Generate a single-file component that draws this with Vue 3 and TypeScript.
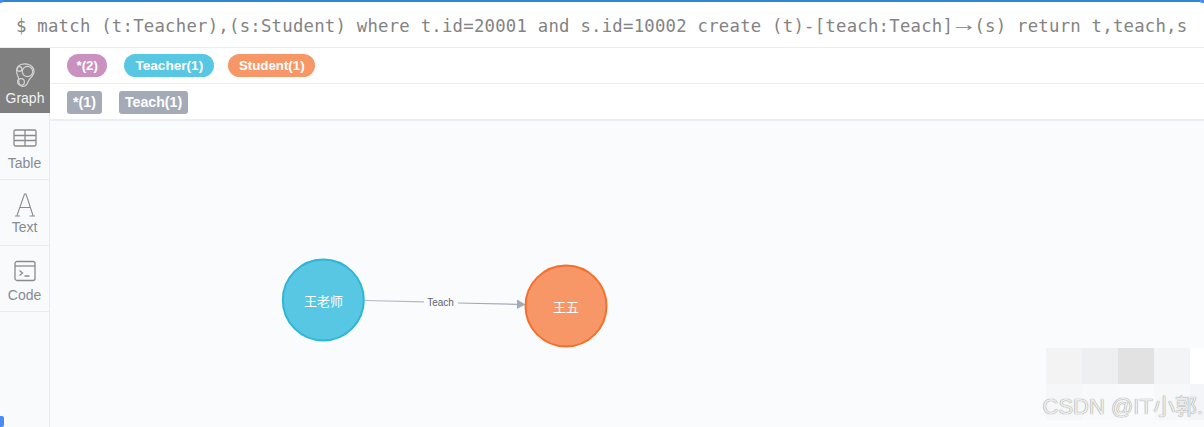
<script setup lang="ts">
const labels = [
  { text: '*(2)', cls: 'pink' },
  { text: 'Teacher(1)', cls: 'blue' },
  { text: 'Student(1)', cls: 'orange' },
]
const rels = ['*(1)', 'Teach(1)']
const mosaic = ['#f3f3f3', '#eeeff0', '#e2e2e3', '#f3f4f5', '#ffffff', '#f6f7f8', '#f8f9fa', '#fafbfc', '#f7f8fa', '#f4f5f8']
</script>

<template>
  <div class="page">
    <header class="query">
      <span class="code">$ match (t:Teacher),(s:Student) where t.id=20001 and s.id=10002 create (t)-[teach:Teach]<span class="arrow">→</span>(s) return t,teach,s</span>
    </header>
    <div class="body">
      <nav class="side">
        <div class="tab active">
          <svg width="24" height="28" viewBox="0 0 24 28" fill="none" stroke="#d4d4d4" stroke-width="1.2">
            <path d="M5 4.500 C8 1.500 13 1.500 17 3 C20 5 22 8 20.500 12 C19 15 16 17 15 20 C14 24 10 25.500 7.500 23.500 C5 21.500 6 19 5.500 16 C3.500 12 2.500 8 5 4.500 Z" />
            <circle cx="14.500" cy="9.500" r="5.200" />
            <circle cx="8" cy="20" r="3.400" />
            <circle cx="6.500" cy="7" r="2.400" />
          </svg>
          <span>Graph</span>
        </div>
        <div class="tab table-tab">
          <svg width="24" height="20" viewBox="0 0 24 20" fill="none" stroke="#8b8b8b" stroke-width="1.300">
            <rect x="1" y="2" width="22" height="16" rx="1.500" />
            <path d="M1 7.500h22M1 12.500h22M12 2v16" />
          </svg>
          <span>Table</span>
        </div>
        <div class="tab text-tab">
          <svg width="22" height="26" viewBox="0 0 22 26" fill="none" stroke="#8b8b8b" stroke-width="1.100">
            <path d="M3 23.500 L10.500 2 L12 2 L19 23.500 M6 15.500 H16 M1 24 H6 M15.500 24 H21" />
          </svg>
          <span>Text</span>
        </div>
        <div class="tab code-tab">
          <svg width="24" height="24" viewBox="0 0 24 24" fill="none" stroke="#8b8b8b" stroke-width="1.300">
            <rect x="2" y="2.500" width="20" height="19" rx="2" />
            <path d="M2 7h20" />
            <path d="M6.500 11.500l3 2.500-3 2.500M11.500 17h5" />
          </svg>
          <span>Code</span>
        </div>
      </nav>
      <main class="main">
        <div class="row">
          <span v-for="l in labels" :key="l.text" class="pill" :class="l.cls">{{ l.text }}</span>
        </div>
        <div class="row rel-row">
          <span v-for="r in rels" :key="r" class="tag">{{ r }}</span>
        </div>
        <div class="canvas">
          <svg class="graph" width="1154" height="306" viewBox="50 121 1154 306">
            <line x1="365" y1="300.500" x2="424" y2="301.800" stroke="#b4b8c4" stroke-width="1.200" />
            <line x1="458" y1="303" x2="517" y2="304.300" stroke="#a5aab7" stroke-width="1.200" />
            <path d="M517 299.500 L525.500 304.500 L517 309 Z" fill="#a5aab7" />
            <text x="440.500" y="306" class="edge">Teach</text>
            <circle cx="323.300" cy="300" r="40.500" fill="#57c7e3" stroke="#2eb5d8" stroke-width="2" />
            <text x="323.500" y="306" class="node">王老师</text>
            <circle cx="566" cy="306" r="40.500" fill="#f79767" stroke="#f4702a" stroke-width="2" />
            <text x="566" y="311.500" class="node">王五</text>
          </svg>
        </div>
      </main>
    </div>
    <div class="mosaic">
      <i v-for="(c, i) in mosaic" :key="i" :style="{ background: c }"></i>
    </div>
    <span class="mark">CSDN @IT小郭.</span>
    <i class="topline"></i>
    <i class="handle h1"></i>
    <i class="handle h2"></i>
    <i class="handle h3"></i>
  </div>
</template>

<style scoped>
.page {
  position: relative;
  width: 1204px;
  height: 427px;
  overflow: hidden;
  background: #fff;
  font-family: "Liberation Sans", Arial, sans-serif;
}
.query {
  box-sizing: border-box;
  height: 48px;
  padding: 15px 0 0 16px;
  border-bottom: 1px solid #eceef2;
  background: #fff;
}
.code {
  font-family: "DejaVu Sans Mono", monospace;
  font-size: 17.300px;
  letter-spacing: 0.245px;
  line-height: 22px;
  color: #838383;
  white-space: pre;
  display: block;
}
.arrow {
  display: inline-block;
  width: 21.300px;
  text-align: center;
  font-family: "Liberation Sans", Arial, sans-serif;
  font-size: 20px;
  letter-spacing: 0;
  line-height: 18px;
  transform: translateY(-1px) scaleX(1.35);
}
.body {
  display: flex;
  height: 379px;
}
.side {
  width: 50px;
  flex: none;
  box-sizing: border-box;
  background: #f9fafc;
  border-right: 1px solid #e9ebef;
}
.tab {
  box-sizing: border-box;
  height: 66px;
  display: flex;
  flex-direction: column;
  align-items: center;
  justify-content: flex-end;
  gap: 4px;
  padding-bottom: 8px;
  font-size: 14px;
  line-height: 16px;
  color: #858b93;
  border-bottom: 1px solid #e9ebef;
}
.tab.active {
  height: 65px;
  width: 50px;
  color: #f2f2f2;
  background: #7f7f7f;
  border-bottom: 0;
  gap: 0;
  padding-bottom: 7px;
}
.table-tab {
  height: 67px;
  gap: 7px;
  padding-bottom: 8px;
}
.text-tab {
  gap: 1px;
  padding-bottom: 10px;
}
.code-tab {
  gap: 4px;
  padding-bottom: 8px;
}
.main {
  flex: 1;
  display: flex;
  flex-direction: column;
  min-width: 0;
}
.row {
  box-sizing: border-box;
  height: 36px;
  display: flex;
  align-items: center;
  gap: 14px;
  padding-left: 17px;
  border-bottom: 1px solid #eceef2;
}
.rel-row {
  height: 37px;
  gap: 17px;
  padding-top: 2px;
  border-bottom-width: 2px;
}
.pill {
  height: 23px;
  line-height: 24px;
  border-radius: 12px;
  padding: 0 11px;
  font-size: 13.300px;
  font-weight: 700;
  color: #fff;
  display: inline-block;
  margin-top: -1px;
}
.pink {
  background: #c990c0;
  padding: 0 9.500px;
  margin-right: 3px;
}
.blue {
  background: #57c7e3;
  font-size: 13.600px;
}
.orange {
  background: #f79767;
  padding: 0 10.700px;
}
.tag {
  height: 23px;
  line-height: 23px;
  border-radius: 3px;
  padding: 0 6px;
  font-size: 14.200px;
  font-weight: 700;
  color: #fff;
  background: #a5abb6;
}
.canvas {
  flex: 1;
  background: #fafbfd;
  position: relative;
}
.graph {
  position: absolute;
  inset: 0;
  display: block;
}
.edge {
  font-family: "Liberation Sans", Arial, sans-serif;
  font-size: 10px;
  fill: #5f6470;
  text-anchor: middle;
}
.node {
  font-family: "Noto Sans CJK SC", sans-serif;
  font-size: 13px;
  fill: #fff;
  text-anchor: middle;
}
.mosaic {
  position: absolute;
  left: 1046px;
  top: 348px;
  width: 180px;
  height: 72px;
  display: grid;
  grid-template-columns: repeat(5, 36px);
  grid-auto-rows: 36px;
}
.mark {
  position: absolute;
  right: 1px;
  top: 394px;
  font-family: "Liberation Sans", "Noto Sans CJK SC", sans-serif;
  font-size: 22px;
  line-height: 26px;
  color: #ececec;
  text-shadow: 0 0 1px #666;
  white-space: nowrap;
}
.topline {
  position: absolute;
  left: 0;
  top: 0;
  width: 1200px;
  height: 2px;
  background: #2f86d8;
}
.handle {
  position: absolute;
  background: #4a8cf7;
  border-radius: 2px;
}
.h1 { left: -2px; top: -2px; width: 5px; height: 5px; }
.h2 { left: 1200px; top: -2px; width: 6px; height: 5px; }
.h3 { left: -2px; top: 416px; width: 6px; height: 11px; }
</style>
